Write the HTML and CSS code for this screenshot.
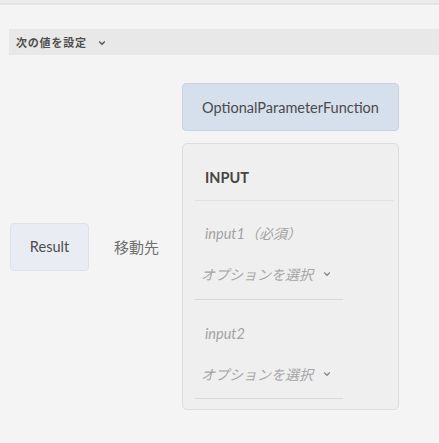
FILE: index.html
```html
<!DOCTYPE html>
<html lang="ja">
<head>
<meta charset="utf-8">
<link rel="stylesheet" href="styles.css">
</head>
<body>
<div class="topstrip"></div>
<div class="toolbar">
  <span class="toolbar-title">次の値を設定</span>
  <svg class="chev" width="8" height="6" viewBox="0 0 8 6"><path d="M1.2 1.5 L4 4.3 L6.8 1.5" fill="none" stroke="#555" stroke-width="1.4"/></svg>
</div>
<div class="flow">
  <div class="result">Result</div>
  <div class="moveto">移動先</div>
  <div class="column">
    <div class="func">OptionalParameterFunction</div>
    <div class="card">
      <div class="card-head">INPUT</div>
      <div class="param first">
        <div class="param-label">input1<span class="cjk">（必須）</span></div>
        <div class="param-select">オプションを選択
          <svg class="chev2" width="8" height="6" viewBox="0 0 8 6"><path d="M1.2 1.5 L4 4.3 L6.8 1.5" fill="none" stroke="#888" stroke-width="1.3"/></svg>
        </div>
      </div>
      <div class="param second">
        <div class="param-label">input2</div>
        <div class="param-select">オプションを選択
          <svg class="chev2" width="8" height="6" viewBox="0 0 8 6"><path d="M1.2 1.5 L4 4.3 L6.8 1.5" fill="none" stroke="#888" stroke-width="1.3"/></svg>
        </div>
      </div>
    </div>
  </div>
</div>
</body>
</html>
```
FILE: styles.css
```css
html, body {
  margin: 0;
  padding: 0;
  background: #f4f4f4;
  font-family: Lato, "Noto Sans CJK JP", sans-serif;
  color: #4b4b4b;
}
.topstrip {
  height: 3px;
  background: #ebebeb;
  border-bottom: 2px solid #e3e3e3;
}
.toolbar {
  margin: 24px 0 0 9px;
  height: 26px;
  background: #e8e8e8;
  display: flex;
  align-items: center;
  padding-left: 7px;
  gap: 9px;
}
.toolbar-title {
  font-family: "Noto Sans CJK JP", sans-serif;
  font-size: 11px;
  font-weight: 700;
  letter-spacing: 0.8px;
  color: #4e4e4e;
}
.chev { margin-top: 1px; margin-left: 2px; }
.flow {
  display: flex;
  align-items: center;
  margin-top: 28px;
  padding-left: 10px;
}
.result {
  box-sizing: border-box;
  width: 79px;
  height: 48px;
  background: #e9edf3;
  border: 1px solid #dde1e8;
  border-radius: 4px;
  display: flex;
  align-items: center;
  justify-content: center;
  font-size: 14.5px;
  color: #4b4b4b;
}
.moveto {
  margin-left: 25px;
  width: 68px;
  font-family: "Noto Sans CJK JP", sans-serif;
  font-size: 15px;
  color: #707070;
}
.column {
  display: flex;
  flex-direction: column;
  gap: 12px;
  width: 217px;
}
.func {
  box-sizing: border-box;
  height: 48px;
  background: #d6dfec;
  border: 1px solid #c8d2e2;
  border-radius: 4px;
  display: flex;
  align-items: center;
  justify-content: center;
  font-size: 14.5px;
  color: #4b4b4b;
}
.card {
  box-sizing: border-box;
  height: 267px;
  background: #efefef;
  border: 1px solid #dcdcdc;
  border-radius: 5px;
  padding: 0 4px 0 12px;
}
.card-head {
  box-sizing: border-box;
  height: 57px;
  padding: 25px 0 0 10px;
  line-height: 18px;
  font-size: 14.5px;
  font-weight: 700;
  color: #454545;
  border-bottom: 1px solid #e2e2e2;
}
.param {
  width: 148px;
  border-bottom: 1px solid #d9d9d9;
  padding-top: 24px;
  padding-bottom: 16px;
}
.param.first { padding-top: 23px; }
.param.second { padding-top: 25px; padding-bottom: 15px; }
.param-label {
  padding-left: 10px;
  line-height: 18px;
  font-size: 14.5px;
  font-style: italic;
  color: #a3a3a3;
  white-space: nowrap;
}
.cjk {
  font-family: "Noto Sans CJK JP", sans-serif;
  font-size: 14px;
}
.param-select {
  margin-top: 22px;
  padding-left: 6px;
  line-height: 18px;
  font-family: "Noto Sans CJK JP", sans-serif;
  font-size: 14px;
  font-style: italic;
  color: #a6a6a6;
  display: flex;
  align-items: center;
  white-space: nowrap;
}
.chev2 { margin-left: 10px; }
```
